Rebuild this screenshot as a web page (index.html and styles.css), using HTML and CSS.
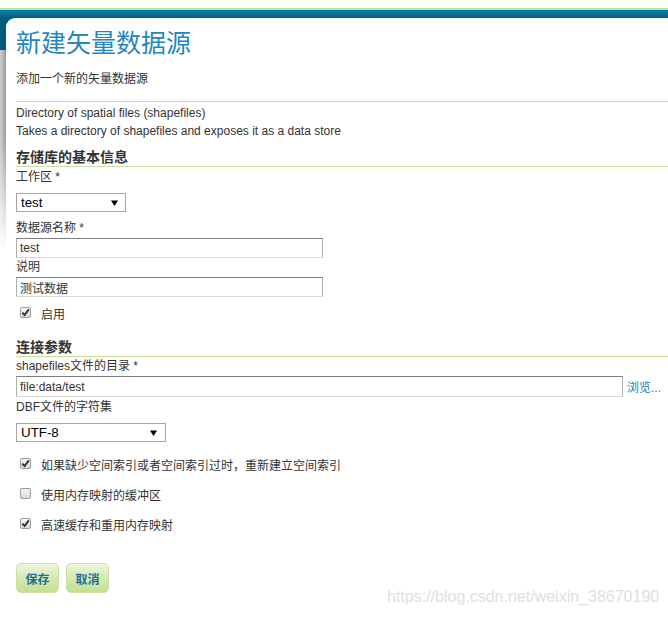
FILE: index.html
```html
<!DOCTYPE html>
<html lang="zh">
<head>
<meta charset="utf-8">
<title>新建矢量数据源</title>
<link rel="stylesheet" href="styles.css">
</head>
<body>
<div class="topline"></div>
<div class="frame">
  <div class="panel">
    <h1 class="title">新建矢量数据源</h1>
    <p class="subtitle">添加一个新的矢量数据源</p>
    <div class="store-desc">
      <div>Directory of spatial files (shapefiles)</div>
      <div>Takes a directory of shapefiles and exposes it as a data store</div>
    </div>
    <form class="form">
      <h2 class="section">存储库的基本信息</h2>
      <label class="field-label first">工作区 *</label>
      <select class="sel sel-ws"><option>test</option></select>
      <label class="field-label gap">数据源名称 *</label>
      <input class="txt txt-short" type="text" value="test">
      <label class="field-label">说明</label>
      <input class="txt txt-short" type="text" value="测试数据">
      <div class="check-row first-check">
        <input class="cb" type="checkbox" checked>
        <span class="cb-label">启用</span>
      </div>

      <h2 class="section section-2">连接参数</h2>
      <label class="field-label">shapefiles文件的目录 *</label>
      <div class="path-row">
        <input class="txt txt-long" type="text" value="file:data/test">
        <a class="browse" href="#">浏览...</a>
      </div>
      <label class="field-label first">DBF文件的字符集</label>
      <select class="sel sel-cs"><option>UTF-8</option></select>
      <div class="check-row opt-first">
        <input class="cb" type="checkbox" checked>
        <span class="cb-label">如果缺少空间索引或者空间索引过时，重新建立空间索引</span>
      </div>
      <div class="check-row opt">
        <input class="cb" type="checkbox">
        <span class="cb-label">使用内存映射的缓冲区</span>
      </div>
      <div class="check-row opt">
        <input class="cb" type="checkbox" checked>
        <span class="cb-label">高速缓存和重用内存映射</span>
      </div>
      <div class="buttons">
        <button class="btn" type="button">保存</button>
        <button class="btn" type="button">取消</button>
      </div>
    </form>
  </div>
</div>
<div class="watermark">https://blog.csdn.net/weixin_38670190</div>
</body>
</html>
```
FILE: styles.css
```css
html, body {
  margin: 0;
  padding: 0;
  background: #fff;
}
body {
  padding-top: 8px;
  font-family: "Liberation Sans", "Noto Sans CJK SC", sans-serif;
  font-size: 12px;
  color: #333;
  position: relative;
  min-height: 610px;
  overflow: hidden;
}
.topline {
  height: 2px;
  background: #c7e0a0;
}
.frame {
  padding-top: 8px;
  background:
    linear-gradient(#0080a6 0, #005e80 8px, #005877 40px) 0 0 / 100% 40px no-repeat,
    linear-gradient(to bottom, rgba(255,255,255,0) 0, rgba(255,255,255,0) 45%, #fff 100%) 0 40px / 6px 200px no-repeat,
    linear-gradient(to right, #cfcfcf, #9c9c9c) 0 40px / 6px 200px no-repeat,
    #fff;
}
.panel {
  margin-left: 6px;
  background: #fff;
  border-top-left-radius: 9px;
  padding: 0 0 0 10px;
  min-height: 580px;
}
.title {
  margin: 0;
  padding-top: 10px;
  font-size: 25px;
  line-height: 30px;
  font-weight: normal;
  color: #2586bd;
}
.subtitle {
  margin: 12px 0 0;
  line-height: 18px;
  padding-bottom: 13px;
  border-bottom: 1px solid #c5e09a;
}
.store-desc {
  margin-top: 2px;
  line-height: 18px;
}
.form {
  display: flex;
  flex-direction: column;
  align-items: flex-start;
  margin: 0;
}
.section {
  align-self: stretch;
  margin: 8px 0 0;
  font-size: 14px;
  line-height: 18px;
  font-weight: bold;
  color: #333;
  border-bottom: 1px solid #c5e09a;
}
.section-2 {
  margin-top: 14px;
}
.field-label {
  display: block;
  line-height: 19px;
}
.field-label.first {
  margin-top: 1px;
}
.field-label.gap {
  margin-top: 7px;
}
.sel {
  -webkit-appearance: none;
  appearance: none;
  margin: 6px 0 0;
  height: 19px;
  box-sizing: border-box;
  border: 1px solid #a6a6a6;
  border-radius: 0;
  padding: 0 0 0 4px;
  font-family: "Liberation Sans", sans-serif;
  font-size: 13.33px;
  line-height: 17px;
  color: #000;
  background: #fff url("data:image/svg+xml,%3Csvg xmlns='http://www.w3.org/2000/svg' width='7' height='6'%3E%3Cpath d='M0 0.5H7L3.5 6Z' fill='%23000'/%3E%3C/svg%3E") no-repeat;
}
.sel-ws {
  width: 110px;
  background-position: right 7px center;
}
.sel-cs {
  width: 150px;
  background-position: right 8px center;
}
.txt {
  display: block;
  margin: 0;
  box-sizing: border-box;
  height: 20px;
  padding: 0 3px;
  border: 1px solid;
  border-color: #7d7d7d #b0b0b0 #d8d8d8 #b0b0b0;
  font-family: "Liberation Sans", "Noto Sans CJK SC", sans-serif;
  font-size: 12px;
  color: #333;
  background: #fff;
}
.txt-short {
  width: 307px;
}
.path-row {
  display: flex;
  align-items: center;
  gap: 4px;
}
.txt-long {
  width: 607px;
  height: 21px;
}
.browse {
  color: #1a80b6;
  text-decoration: none;
  font-size: 12px;
}
.check-row {
  display: flex;
  align-items: flex-start;
  line-height: 18px;
}
.first-check {
  margin-top: 9px;
}
.opt-first {
  margin-top: 15px;
}
.opt {
  margin-top: 12px;
}
.cb {
  -webkit-appearance: none;
  appearance: none;
  margin: 1px 0 0 4px;
  width: 11px;
  height: 11px;
  box-sizing: border-box;
  border: 1px solid #9c9c9c;
  border-radius: 2px;
  background: linear-gradient(#f6f6f6, #d9d9d9);
}
.cb:checked {
  background:
    url("data:image/svg+xml,%3Csvg xmlns='http://www.w3.org/2000/svg' width='9' height='9'%3E%3Cpath d='M1.3 4.6L3.6 7L7.8 1.4' fill='none' stroke='%23333' stroke-width='1.9'/%3E%3C/svg%3E") center / 9px 9px no-repeat,
    linear-gradient(#f6f6f6, #d9d9d9);
}
.cb-label {
  margin-left: 10px;
  margin-top: 0;
}
.buttons {
  display: flex;
  gap: 7px;
  margin-top: 28px;
}
.btn {
  width: 43px;
  height: 30px;
  padding: 0;
  border: 1px solid #c9e1a4;
  border-radius: 5px;
  background: linear-gradient(#eef6df 0%, #d6eab4 45%, #c4df94 100%);
  font-family: "Liberation Sans", "Noto Sans CJK SC", sans-serif;
  font-size: 12px;
  font-weight: bold;
  color: #1d6e9c;
}
.watermark {
  position: absolute;
  left: 387px;
  top: 588px;
  font-family: "Liberation Sans", sans-serif;
  font-size: 16px;
  color: #e0e0e0;
  white-space: nowrap;
}
```
